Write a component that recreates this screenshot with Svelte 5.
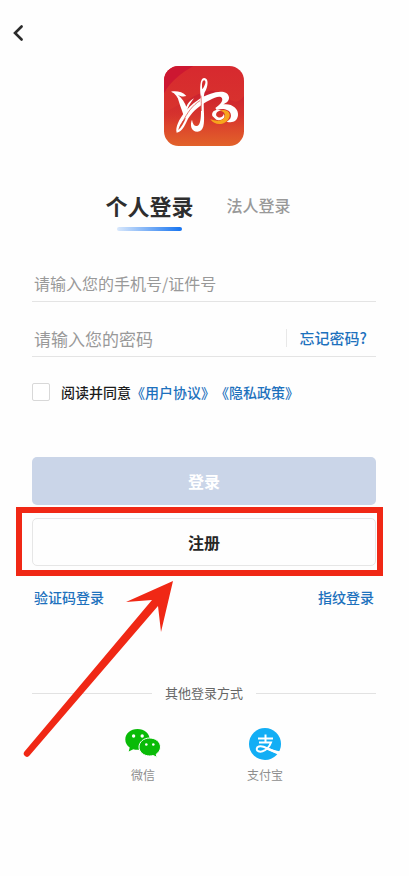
<script>
  let tab = 'personal';
  let account = '';
  let password = '';
  let agreed = false;

  const tabs = [
    { key: 'personal', label: '个人登录' },
    { key: 'legal', label: '法人登录' }
  ];
</script>

<main>
  <header>
    <button class="back" aria-label="返回">
      <svg width="12" height="18" viewBox="0 0 12 18">
        <path d="M9.600 2.500 3 9l6.600 6.500" fill="none" stroke="#2b2b2b" stroke-width="2.600" stroke-linecap="round" />
      </svg>
    </button>
  </header>

  <svg class="logo" viewBox="30 30 240 240" aria-hidden="true">
    <defs>
      <linearGradient id="logo-bg" x1="0" y1="0" x2="0" y2="1">
        <stop offset="0" stop-color="#d7292f" />
        <stop offset="0.6" stop-color="#d8342d" />
        <stop offset="1" stop-color="#e2622a" />
      </linearGradient>
      <linearGradient id="logo-wave" x1="0" y1="0" x2="0" y2="1">
        <stop offset="0" stop-color="#c81f30" />
        <stop offset="1" stop-color="#d8382c" stop-opacity="0" />
      </linearGradient>
      <clipPath id="logo-clip"><rect x="30" y="30" width="240" height="240" rx="44" /></clipPath>
    </defs>
    <g clip-path="url(#logo-clip)">
      <rect x="30" y="30" width="240" height="240" fill="url(#logo-bg)" />
      <path d="M30 30H118C86 48 50 74 30 112Z" fill="#cd1731" />
      <path d="M30 168C80 150 118 112 168 104C212 98 236 168 270 120V215C190 225 120 180 30 210Z" fill="url(#logo-wave)" />
    </g>
    <g fill="#fff">
      <path d="M51 107C66 104 86 107 97 120C88 123 78 121 71 116C84 126 93 140 97 152C101 142 108 134 120 127C110 140 102 151 99 164L91 186C87 170 79 153 75 138C72 123 64 112 51 107Z" />
      <path d="M68 230C63 214 76 190 90 171C112 143 143 121 170 113C192 105 222 102 225 124C226 135 217 141 208 145C232 141 255 157 252 178C250 195 236 203 218 197C229 191 233 182 230 173C225 160 206 156 188 162L184 156C198 146 208 136 204 127C199 118 183 124 168 132C139 146 117 165 103 187C95 203 87 227 68 230ZM73 222C82 214 90 199 96 185C86 193 76 208 73 222Z" fill-rule="evenodd" />
      <path d="M140 120C137 99 138 66 150 66C165 65 163 92 152 109C148 120 149 145 150 174C151 203 150 227 130 227C111 227 107 206 114 191C116 204 121 211 129 210C139 208 141 187 141 165ZM145 100C153 90 158 75 151 73C144 73 143 86 145 100Z" fill-rule="evenodd" />
      <path d="M175 180C171 163 190 157 206 164C194 162 184 170 187 179C193 188 208 185 209 174C218 187 199 196 187 191Z" />
    </g>
    <path d="M197 164C219 156 233 171 225 186C214 210 181 209 169 190C187 197 207 196 212 183C215 172 209 166 197 164Z" fill="#f7a51c" />
    <g fill="none" stroke="#d9372d" stroke-width="2">
      <path d="M85 200C100 169 116 148 138 134" />
      <path d="M141 119C142 135 142 150 142 165" />
    </g>
  </svg>

  <nav>
    {#each tabs as item}
      <button class="tab" class:selected={tab === item.key} on:click={() => (tab = item.key)}>{item.label}</button>
    {/each}
  </nav>

  <form on:submit|preventDefault>
    <div class="field">
      <input type="text" bind:value={account} placeholder="请输入您的手机号/证件号" aria-label="手机号/证件号" />
    </div>
    <div class="field password">
      <input type="password" bind:value={password} placeholder="请输入您的密码" aria-label="密码" />
      <a class="forgot" href="#forgot">忘记密码?</a>
    </div>

    <div class="agree">
      <input id="agree" type="checkbox" bind:checked={agreed} />
      <label for="agree">阅读并同意</label><a href="#terms">《用户协议》</a><a href="#privacy">《隐私政策》</a>
    </div>

    <button class="submit" type="submit">登录</button>
    <div class="register">
      <button type="button">注册</button>
      <div class="highlight"></div>
      <svg class="arrow" width="160" height="184" viewBox="20 576 160 184" aria-hidden="true">
        <path d="M173 581 126 602 152 600 24.500 751.500A3 3 0 0 0 29.500 755.500L158 606 161 632Z" fill="#f02815" />
      </svg>
    </div>
  </form>

  <div class="links">
    <a href="#code">验证码登录</a>
    <a href="#fingerprint">指纹登录</a>
  </div>

  <div class="divider"><span>其他登录方式</span></div>

  <div class="others">
    <button>
      <svg width="36" height="32" viewBox="0 0 36 32" aria-hidden="true">
        <path d="M12.500 1C5.600 1 .3 5.600.3 11.500c0 3.300 1.700 6.200 4.400 8.100L3.700 23.500l4.600-2.300c1.300.4 2.700.6 4.200.6 6.900 0 12.200-4.600 12.200-10.400S19.400 1 12.500 1Z" fill="#09bb07" />
        <path d="M24.700 10c-6 0-10.700 3.900-10.700 9s4.700 9 10.700 9c1.300 0 2.500-.2 3.600-.5l3.800 2-.9-3.300c2.600-1.600 4.300-4.300 4.300-7.200 0-5.100-4.800-9-10.800-9Z" fill="#09bb07" stroke="#fff" stroke-width="1" />
        <g fill="#fff">
          <circle cx="8.600" cy="8" r="1.700" /><circle cx="17.200" cy="8" r="1.700" />
          <circle cx="21.300" cy="16.500" r="1.300" /><circle cx="28.300" cy="16.500" r="1.300" />
        </g>
      </svg>
      <span>微信</span>
    </button>
    <button>
      <svg width="32" height="32" viewBox="0 0 32 32" aria-hidden="true">
        <circle cx="16" cy="16" r="16" fill="#12aef5" />
        <g fill="none" stroke="#fff" stroke-width="2">
          <path d="M9 10.500H24M16.500 6.500V14.500" />
          <path d="M10 14.500H22C20.500 18.500 17.500 22 13.500 23.300C10.500 24.200 7.700 23.200 7.700 20.900C7.700 18.400 11 17.500 14.500 18.800C19 20.500 24 23.200 29.500 25" />
        </g>
        <path d="M19.500 20C23 21.400 27 22.800 31.300 23.500L28.500 26.200C25 25 21.500 23.200 18 21.700Z" fill="#fff" />
      </svg>
      <span>支付宝</span>
    </button>
  </div>
</main>

<style>
  :global(body) {
    margin: 0;
    background: #fefefe;
    font-family: "Noto Sans CJK SC", sans-serif;
  }
  main {
    padding: 0 33px 0 32px;
    overflow: hidden;
  }
  button {
    padding: 0;
    border: none;
    background: none;
    font-family: inherit;
    cursor: pointer;
  }
  a {
    color: #1d71bd;
    font-weight: 500;
    text-decoration: none;
  }
  header {
    display: flex;
    height: 66px;
    align-items: center;
    margin-left: -20px;
  }
  .back {
    display: flex;
  }
  .logo {
    display: block;
    width: 80px;
    height: 80px;
    margin: 0 auto;
  }
  nav {
    display: flex;
    justify-content: center;
    align-items: center;
    gap: 33px;
    height: 50px;
    margin: 34px 12px 0 0;
  }
  .tab {
    position: relative;
    height: 50px;
    color: #999;
    font-size: 16px;
    font-weight: 500;
  }
  .tab.selected {
    color: #2e2e2e;
    font-size: 22px;
    font-weight: 700;
  }
  .tab.selected::after {
    content: "";
    position: absolute;
    bottom: -1px;
    left: 12px;
    right: 12px;
    height: 4px;
    border-radius: 2px;
    background: linear-gradient(90deg, #d9e8fc, #1573f0);
  }
  form {
    margin-top: 17px;
  }
  .field {
    display: flex;
    align-items: flex-end;
    height: 54px;
    border-bottom: 1px solid #e4e4e4;
  }
  .field input {
    flex: 1;
    min-width: 0;
    height: 36px;
    padding: 0 2px;
    border: none;
    outline: none;
    background: none;
    color: #333;
    font-family: inherit;
    font-size: 16px;
  }
  .field.password input {
    font-size: 17px;
  }
  .field input::placeholder {
    color: #999;
    opacity: 1;
  }
  .forgot {
    margin-bottom: 9px;
    padding: 0 9px 0 13px;
    border-left: 1px solid #e8e8e8;
    font-size: 15px;
    line-height: 18px;
  }
  .agree {
    display: flex;
    align-items: center;
    margin-top: 24px;
    font-size: 14px;
    line-height: 22px;
  }
  .agree input {
    appearance: none;
    width: 18px;
    height: 18px;
    margin: 0 11px 0 0;
    border: 1px solid #d8d8d8;
    border-radius: 2px;
    background: #fff;
  }
  .agree input:checked {
    background: #1573f0;
  }
  .agree label {
    color: #1c1c1c;
    font-weight: 500;
  }
  .submit, .register button {
    display: block;
    width: 100%;
    height: 48px;
    border-radius: 5px;
    font-size: 16px;
    font-weight: 700;
  }
  .submit {
    margin-top: 54px;
    background: #cad5e8;
    color: #fff;
  }
  .register {
    position: relative;
    margin-top: 13px;
  }
  .register button {
    border: 1px solid #e6e6e6;
    color: #262626;
  }
  .highlight {
    position: absolute;
    inset: -11px -7px -10px -16px;
    border: 6px solid #f02815;
    pointer-events: none;
  }
  .arrow {
    position: absolute;
    top: 58px;
    left: -12px;
    z-index: 1;
    pointer-events: none;
  }
  .links {
    display: flex;
    justify-content: space-between;
    margin-top: 20px;
    padding: 0 2px;
    font-size: 14px;
    line-height: 22px;
  }
  .divider {
    display: flex;
    align-items: center;
    gap: 13px;
    margin-top: 74px;
    color: #666;
    font-size: 13px;
    line-height: 22px;
  }
  .divider::before, .divider::after {
    content: "";
    flex: 1;
    height: 1px;
    background: #e2e2e2;
  }
  .others {
    display: flex;
    justify-content: center;
    gap: 86px;
    margin-top: 24px;
  }
  .others button {
    display: flex;
    flex-direction: column;
    align-items: center;
    gap: 6px;
    color: #8e8e8e;
    font-size: 12px;
    line-height: 18px;
  }
</style>
